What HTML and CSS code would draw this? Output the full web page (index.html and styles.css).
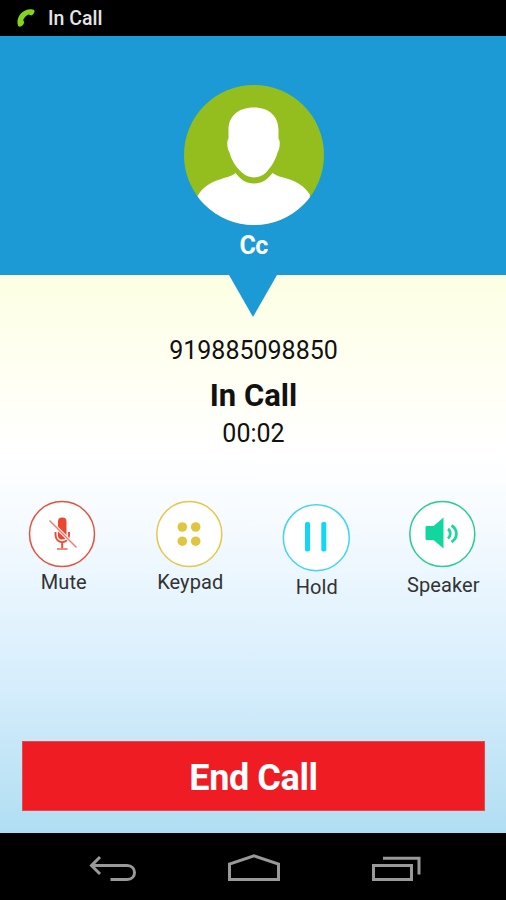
FILE: index.html
```html
<!DOCTYPE html>
<html lang="en">
<head>
    <meta charset="UTF-8">
    <meta name="viewport" content="width=device-width, initial-scale=1.0">
    <title>In Call</title>
    <link rel="stylesheet" href="styles.css">
</head>
<body>
    <div class="status-bar">
        <svg class="status-icon" width="20" height="20" viewBox="0 0 20 20">
            <path d="M2 17.6 C-0.5 10 5.5 1.5 14.5 1.2 C18 1 19 2.2 18.4 4 C17.8 5.8 16.6 7.5 15.2 7.4 L12.8 6.4 C10.4 7 8.2 9.4 7.2 12 L8.2 14.2 C8 16 6.4 18 4.4 18.6 C3 19 2.4 18.6 2 17.6 Z" fill="#85d41a"/>
        </svg>
        <span class="status-text">In Call</span>
    </div>

    <header class="caller">
        <svg class="avatar" width="142" height="142" viewBox="0 0 142 142">
            <defs>
                <clipPath id="avatar-clip">
                    <circle cx="71" cy="71" r="70"/>
                </clipPath>
            </defs>
            <circle cx="71" cy="71" r="70" fill="#94be1e"/>
            <g clip-path="url(#avatar-clip)" fill="#fff">
                <path d="M71 23.5 C87 23.5 95.5 33 95.5 46 L95.5 55 C97.5 56 97 65 94.5 68.5 C92 78 87 84 83 88.5 C76 95 66 95 59 88.5 C54 84 49 78 46.5 68.5 C44 65 43.5 56 45.5 55 L45.5 46 C45.5 33 54 23.5 71 23.5 Z"/>
                <path d="M52.5 89 C57 94 61 99.5 71 99.5 C81 99.5 85 94 89.5 89 C98 95.5 115 93 126.5 110 L132 142 L8 142 L14.5 112 C26 93 45 96 52.5 89 Z"/>
            </g>
        </svg>
        <div class="caller-name">Cc</div>
    </header>

    <main class="call">
        <svg class="pointer" width="50" height="42" viewBox="0 0 50 42">
            <path d="M1 0 L49 0 L25 42 Z" fill="#1b9ad6"/>
        </svg>
        <div class="number">919885098850</div>
        <h1 class="state">In Call</h1>
        <div class="timer">00:02</div>

        <div class="actions">
            <div class="action">
                <svg width="70" height="68" viewBox="0 0 70 68">
                    <circle cx="34" cy="34" r="32.5" fill="#fff" stroke="#e5533f" stroke-width="1.5"/>
                    <rect x="30" y="17.5" width="8.5" height="22" rx="4" fill="#ea4630"/>
                    <path d="M27.5 32 V35 C27.5 44.5 41 44.5 41 35 V32 M34.2 43 V48.5" fill="none" stroke="#e8503c" stroke-width="2"/>
                    <path d="M29 49 H39.5" stroke="#ef8a7c" stroke-width="2"/>
                    <path d="M21.5 20.5 L48.5 47.5" stroke="#fff" stroke-width="3.2"/>
                    <path d="M21.5 20.5 L48.5 47.5" stroke="#ed7c6d" stroke-width="1.5"/>
                </svg>
                <span class="label">Mute</span>
            </div>
            <div class="action">
                <svg width="70" height="68" viewBox="0 0 70 68">
                    <circle cx="34.3" cy="34" r="32.5" fill="#fff" stroke="#e2c94d" stroke-width="1.5"/>
                    <g fill="#e0c640">
                        <circle cx="27.3" cy="27" r="4.8"/>
                        <circle cx="40.7" cy="27" r="4.8"/>
                        <circle cx="27.3" cy="41.2" r="4.8"/>
                        <circle cx="40.7" cy="41.2" r="4.8"/>
                    </g>
                </svg>
                <span class="label">Keypad</span>
            </div>
            <div class="action hold">
                <svg width="70" height="70" viewBox="0 0 70 70">
                    <circle cx="35.3" cy="34.7" r="33" fill="#fff" stroke="#45d3f3" stroke-width="1.5"/>
                    <rect x="24" y="19" width="5" height="29.5" rx="1.8" fill="#12d6f7"/>
                    <rect x="40.3" y="19" width="5" height="29.5" rx="1.8" fill="#12d6f7"/>
                </svg>
                <span class="label">Hold</span>
            </div>
            <div class="action speaker">
                <svg width="70" height="68" viewBox="0 0 70 68">
                    <circle cx="34.3" cy="34" r="32.5" fill="#fff" stroke="#29cd94" stroke-width="1.5"/>
                    <path d="M19 26 H25.5 L35.5 17.5 V48.5 L25.5 40 H19 C18 40 17.5 39.5 17.5 38.5 V27.5 C17.5 26.5 18 26 19 26 Z" fill="#10d79d"/>
                    <path d="M40 29 C43 31 43 36 40 38.5 M43.5 25.5 C50 29.5 50 38 43.5 42" fill="none" stroke="#20d4a0" stroke-width="2.8"/>
                </svg>
                <span class="label">Speaker</span>
            </div>
        </div>

        <button class="end-call" type="button">End Call</button>
    </main>

    <nav class="nav-bar">
        <svg width="48" height="30" viewBox="0 0 48 30">
            <path d="M11 3 L2.5 11.5 L11 20 M3 11.5 H38 C48 11.5 48 25.5 38 25.5 H21.5"/>
        </svg>
        <svg width="54" height="30" viewBox="0 0 54 30">
            <path d="M2.5 25.5 V10 L27 1.8 L51.5 10 V25.5 Z"/>
        </svg>
        <svg width="50" height="30" viewBox="0 0 50 30">
            <path d="M2.5 11.5 H40.5 V25.5 H2.5 Z M12 4.2 H48 V20.5"/>
        </svg>
    </nav>
</body>
</html>
```
FILE: styles.css
```css
* {
    box-sizing: border-box;
}

body {
    font-family: Roboto, sans-serif;
    margin: 0;
    height: 900px;
    display: flex;
    flex-direction: column;
    background-color: #000;
}

svg {
    display: block;
    flex-shrink: 0;
}

.status-bar {
    height: 36px;
    padding-left: 16px;
    display: flex;
    align-items: center;
    gap: 12px;
    background-color: #000;
}

.status-text {
    color: #e4e4e4;
    font-size: 19.5px;
    font-weight: 500;
}

.caller {
    height: 239px;
    padding: 48px 0 0 1px;
    display: flex;
    flex-direction: column;
    align-items: center;
    background-color: #1b9ad6;
}

.caller-name {
    margin-top: 5px;
    color: #fff;
    font-size: 25px;
    line-height: 30px;
    font-weight: 700;
    letter-spacing: -0.8px;
}

.call {
    height: 558px;
    display: flex;
    flex-direction: column;
    align-items: center;
    background: linear-gradient(#fdffe3 0%, #fffff5 20%, #fff 32%, #f4faff 46%, #d5edfc 74%, #b0def2 100%);
    color: #111;
}

.number {
    margin-top: 19px;
    padding-left: 1px;
    font-size: 25px;
    line-height: 30px;
}

.state {
    margin: 12px 0 0;
    padding-left: 1px;
    font-size: 31px;
    line-height: 36px;
    font-weight: 700;
}

.timer {
    margin-top: 5px;
    padding-left: 1px;
    font-size: 25px;
    line-height: 30px;
}

.actions {
    width: 100%;
    height: 110px;
    margin-top: 51px;
    display: grid;
    grid-template-columns: repeat(4, 1fr);
}

.action {
    display: flex;
    flex-direction: column;
    align-items: center;
}

.label {
    margin-top: 2px;
    padding-left: 1px;
    color: #333;
    font-size: 20px;
    line-height: 24px;
    letter-spacing: 0.1px;
}

.hold {
    padding-top: 3px;
}

.speaker .label {
    margin-top: 5px;
}

.end-call {
    width: 463px;
    height: 70px;
    margin-top: 131px;
    padding: 4px 0 0 1px;
    border: 1px solid #e04a50;
    background-color: #ef1c24;
    color: #fff;
    font-family: inherit;
    font-size: 36px;
    font-weight: 700;
    letter-spacing: -0.4px;
    cursor: pointer;
}

.nav-bar {
    height: 67px;
    padding: 5px 85px 0 89px;
    display: flex;
    align-items: center;
    justify-content: space-between;
    background-color: #000;
    fill: none;
    stroke: #999;
    stroke-width: 3px;
}
```
